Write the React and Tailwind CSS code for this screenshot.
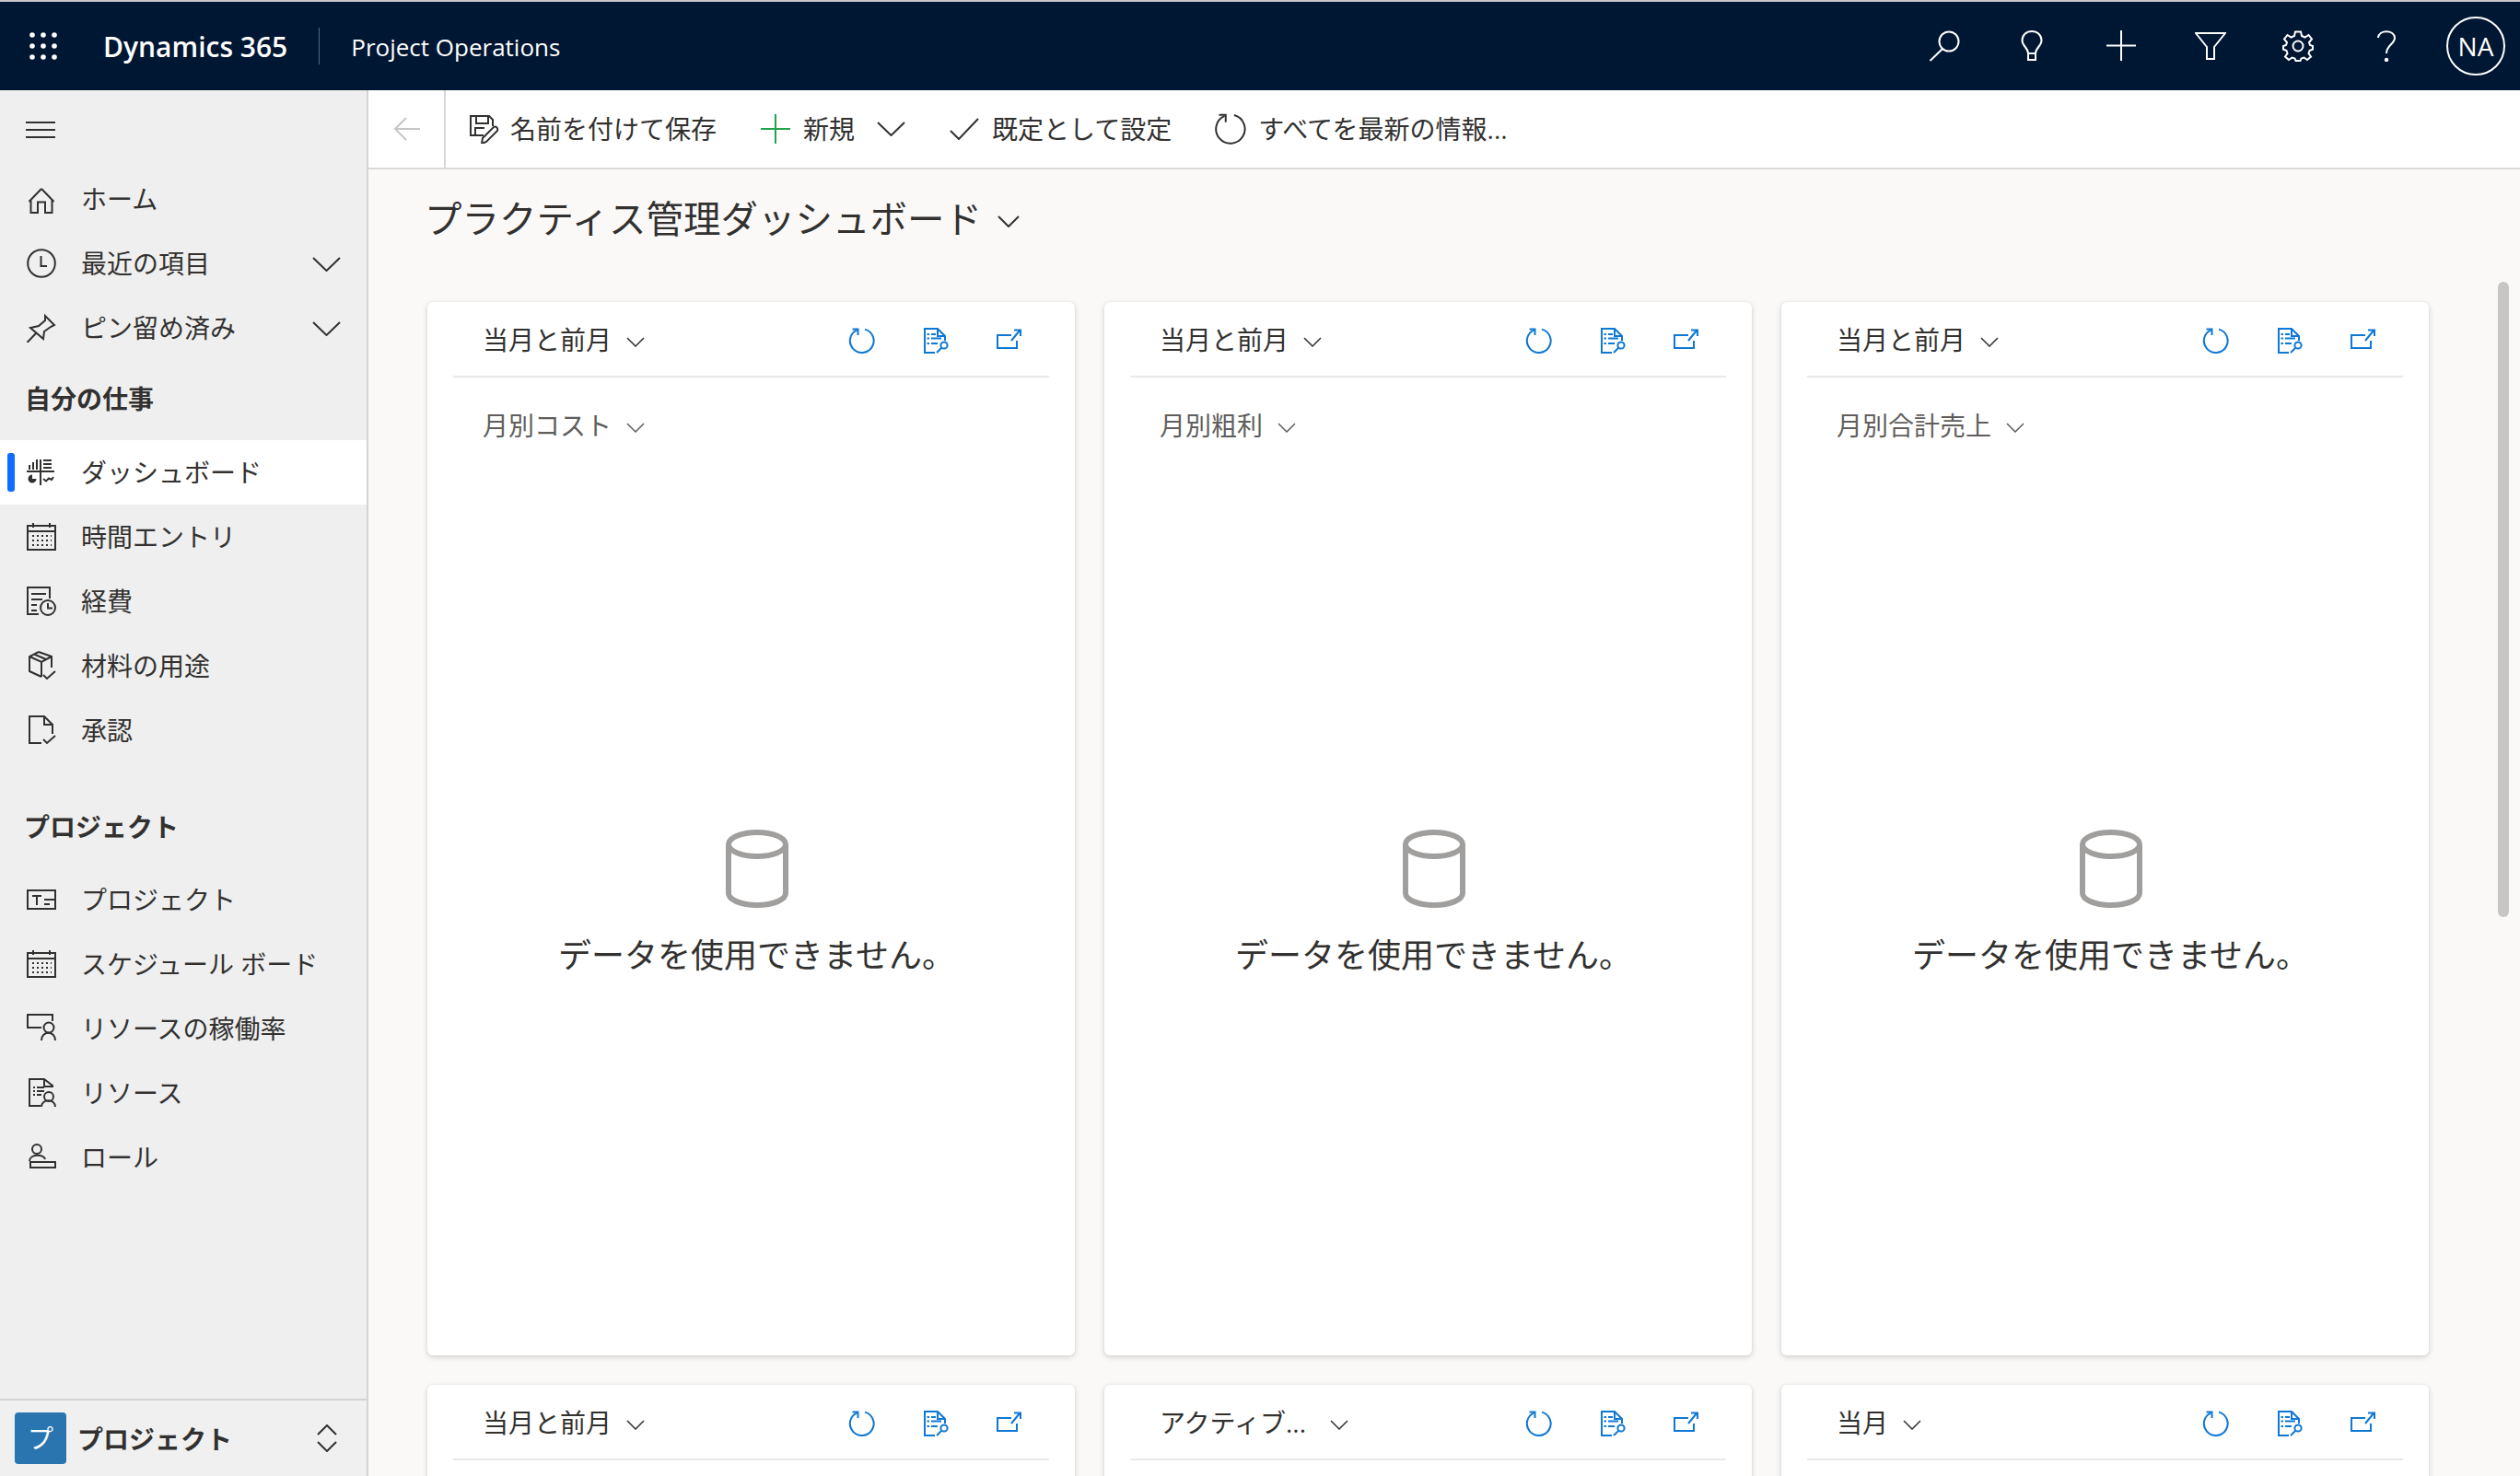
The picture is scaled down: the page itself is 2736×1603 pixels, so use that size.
import React from "react";

const Svg = ({ w = 32, h = 32, className = "", sw = 2, children }) => (
  <svg width={w} height={h} viewBox={`0 0 ${w} ${h}`} fill="none" stroke="currentColor" strokeWidth={sw} className={`flex-none ${className}`}>
    {children}
  </svg>
);

const Chevron = ({ w = 31, h = 16, sw = 2, className = "" }) => (
  <Svg w={w} h={h} sw={sw} className={className}>
    <path d={`M1 1 L${w / 2} ${h - 1} L${w - 1} 1`} />
  </Svg>
);

const Home = () => (
  <Svg><path d="M16 5 L2.5 19 M16 5 L29.5 19 M4.5 17 V31 H12 V19.5 H20 V31 H27.5 V17" /></Svg>
);
const Clock = () => (
  <Svg><circle cx="16" cy="16" r="14.8" /><path d="M15.5 8 V19 H22" /></Svg>
);
const Pin = () => (
  <Svg><path d="M20 3 L30 13 L26 15 L19 20 L18 28 L4 16 L13 14 L20 8 Z M0.5 32 L10.5 21.5" /></Svg>
);
const Dash = () => (
  <Svg>
    <path d="M15 2 V30 M0 15 H30" />
    <path d="M3 8 V13 M7 5 V13 M11 2 V13 M18 3 H27 M18 7 H27 M18 11 H27" />
    <path d="M6 18.5 A4.5 4.5 0 1 0 10.5 23 H6 Z" fill="currentColor" stroke="none" />
    <path d="M18 23 L21 25.5 L24 22.5 L27 24 L29 21" />
  </Svg>
);
const Calendar = () => (
  <Svg>
    <rect x="1" y="4" width="30" height="26" />
    <path d="M1 10 H31 M7 1 V6 M25 1 V6" />
    <path d="M6 15 H27 M6 20 H27 M6 25 H27" strokeDasharray="2 3" />
  </Svg>
);
const Expense = () => (
  <Svg>
    <path d="M13 30 H1 V1 H25 V13" />
    <path d="M5 8 H21 M5 14 H17 M5 20 H11 M5 26 H11" />
    <circle cx="23" cy="23" r="8" />
    <path d="M23 18 V23.5 H28" />
  </Svg>
);
const Box = () => (
  <Svg>
    <path d="M13 1 L3 6 V22 L16 28 M13 1 L27 6 V18 M3 6 L16 12 L27 6 M16 12 V28 M8 3.5 L21 9" />
    <path d="M18 26 L22 30 L31 22" />
  </Svg>
);
const Approve = () => (
  <Svg>
    <path d="M16 30 H3 V1 H19 L28 10 V20 M19 1 V10 H28" />
    <path d="M18 26 L22 30 L31 22" />
  </Svg>
);
const ProjectIcon = () => (
  <Svg>
    <rect x="1" y="6" width="30" height="20" />
    <path d="M6 12 H16 M11 12 V22 M19 16 H31 M19 21 H25" />
  </Svg>
);
const Util = () => (
  <Svg>
    <path d="M16 15 H1 V1 H28 V8" />
    <circle cx="24" cy="15" r="5.5" />
    <path d="M16 29 C16 18 31 18 31 29" />
  </Svg>
);
const Res = () => (
  <Svg>
    <path d="M15 30 H3 V1 H19 L28 8 V10 M19 1 V9 H28" />
    <path d="M7 10 H9 M11 10 H19 M7 14 H9 M11 14 H19 M7 18 H9 M11 18 H16" />
    <circle cx="24" cy="20" r="5" />
    <path d="M16 31 C16 22 31 22 31 31" />
  </Svg>
);
const Role = () => (
  <Svg>
    <circle cx="11" cy="7" r="5" />
    <path d="M3 20 C3 12 19 12 20 18" />
    <rect x="4" y="21" width="27" height="6" />
  </Svg>
);

const SideItem = ({ icon, label, chevron, active }) => (
  <div className={`relative flex h-[70px] items-center pl-[29px] ${active ? "bg-white" : ""}`}>
    {active && <div className="absolute left-[8px] top-[14px] h-[42px] w-[8px] rounded-[3px] bg-[#0f6cff]" />}
    <span className="flex w-[32px] flex-none text-[#323130]">{icon}</span>
    <span className="ml-[27px] text-[28px] leading-[40px] text-[#323130]">{label}</span>
    {chevron && <Chevron className="ml-auto mr-[28px] mt-[2px] text-[#323130]" />}
  </div>
);

const Refresh = ({ size = 28, className = "" }) => {
  const s = size / 28;
  return (
    <Svg w={size + 1} h={size + 1} className={className}>
      <path d={`M${18 * s} ${1.6 * s} A${12.9 * s} ${12.9 * s} 0 1 1 ${9.5 * s} ${2.3 * s}`} />
      <path d={`M${4.5 * s} ${1.5 * s} H${10.5 * s} V${8 * s}`} />
    </Svg>
  );
};

const Report = () => (
  <Svg w={28} h={28}>
    <path d="M12 27 H1 V1 H15 L23 9 V14 M15 1 V9 H23" />
    <path d="M3.5 7 H6 M8 7 H13 M3.5 11.5 H6 M8 11.5 H19 M3.5 17 H6 M8 17 H15" />
    <circle cx="22" cy="19" r="3.6" />
    <path d="M19.5 21.5 L14 27" />
  </Svg>
);

const Popout = () => (
  <Svg w={27} h={26}>
    <path d="M16 7 H1 V21 H22 V13" />
    <path d="M16 13 L25 2 M19 1.5 H26 V8" />
  </Svg>
);

const Cylinder = () => (
  <Svg w={68} h={85} sw={6}>
    <ellipse cx="34" cy="16" rx="31" ry="13" />
    <path d="M3 16 V69 C3 76 16 82 34 82 C52 82 65 76 65 69 V16" />
  </Svg>
);

const Card = ({ title, sub, cropped, chevGap = "ml-[16px]" }) => (
  <div className="h-[1144px] rounded-[6px] bg-white shadow-[0_2px_6px_rgba(0,0,0,0.16),0_0_2px_rgba(0,0,0,0.08)]">
    <div className="mx-[28px] flex h-[82px] items-center border-b-2 border-[#e9e9e9] pl-[32px] pr-[30px] pt-[2px]">
      <span className="text-[28px] leading-[40px] text-[#323130]">{title}</span>
      <Chevron w={20} h={11} sw={1.5} className={`${chevGap} mt-[4px] text-[#323130]`} />
      <div className="ml-auto mt-[2px] flex items-center text-[#0f78d4]">
        <Refresh />
        <span className="ml-[53px] flex"><Report /></span>
        <span className="ml-[51px] flex"><Popout /></span>
      </div>
    </div>
    {!cropped && (
      <>
        <div className="ml-[60px] flex h-[104px] items-center text-[#605e5c]">
          <span className="text-[28px] leading-[40px]">{sub}</span>
          <Chevron w={20} h={11} sw={1.5} className="ml-[16px] mt-[4px]" />
        </div>
        <div className="flex flex-col items-center pl-[12px] pt-[387px]">
          <span className="text-[#a19f9d]"><Cylinder /></span>
          <div className="mt-[28px] text-[36px] leading-[48px] text-[#323130]">データを使用できません。</div>
        </div>
      </>
    )}
  </div>
);

const HeaderIcons = () => (
  <div className="ml-auto flex items-center text-white">
    <Svg w={34} h={34} className="mr-[66px]"><circle cx="22" cy="12" r="10.5" /><path d="M15 20 L1.5 33" /></Svg>
    <Svg w={24} h={34} className="mr-[68px]">
      <path d="M8 25 C8 19 1.5 17 1.5 11 C1.5 5 6 1 12 1 C18 1 22.5 5 22.5 11 C22.5 17 16 19 16 25 Z M8 25 V32 H16 V25" />
    </Svg>
    <Svg w={34} h={34} className="mr-[63px]"><path d="M17 0 V33 M1 16.5 H33" /></Svg>
    <Svg w={34} h={32} className="mr-[61px]"><path d="M1 2 H33 L21 17 V30 H13 V17 Z" /></Svg>
    <Svg w={34} h={34} sw={2} className="mr-[68px]">
      <circle cx="17" cy="17" r="5.5" />
      <path d="M14 1.5 H20 L21 6 L24.5 7.5 L28.5 5 L32 9.5 L29 13 L30 16 L33 17 L33 20.5 L29.5 22 L28.5 25 L31 28.5 L27 32 L23.5 29.5 L20.5 30.5 L19.5 33 H14.5 L13.5 30.5 L10.5 29.5 L7 32 L3 28.5 L5.5 25 L4.5 22 L1 20.5 V17 L4 16 L5 13 L2 9.5 L5.5 5 L9.5 7.5 L13 6 Z" />
    </Svg>
    <Svg w={22} h={34} className="mr-[54px]">
      <path d="M2 8 C3 -1 19 -1 20 8 C20 15 11 16 11 25" />
      <circle cx="11" cy="32" r="1.2" fill="currentColor" />
    </Svg>
    <div className="mr-[16px] flex h-[64px] w-[64px] items-center justify-center rounded-full border-2 border-white text-[28px] text-white">NA</div>
  </div>
);

export default function App() {
  return (
    <div className="flex h-[1603px] w-[2736px] flex-col overflow-hidden border-t-2 border-[#c8c8c8] bg-[#faf9f8] font-['Open_Sans','Noto_Sans_CJK_JP',sans-serif] text-[#323130]">
      <header className="flex h-[96px] flex-none items-center bg-[#001733] text-white">
        <svg width="30" height="30" viewBox="0 0 30 30" fill="white" className="ml-[32px] flex-none">
          {[3, 15, 27].map((y) => [3, 15, 27].map((x) => <circle key={`${x}-${y}`} cx={x} cy={y} r="2.8" />))}
        </svg>
        <span className="ml-[50px] pt-[2px] text-[30px] font-semibold leading-[40px]">Dynamics 365</span>
        <div className="ml-[34px] h-[40px] w-[1px] bg-[#55667f]" />
        <span className="ml-[34px] pt-[2px] text-[26px] leading-[40px]">Project Operations</span>
        <HeaderIcons />
      </header>

      <div className="flex min-h-0 flex-1">
        <aside className="flex w-[400px] flex-none flex-col border-r-2 border-[#d4d4d4] bg-[#efefef]">
          <div className="flex h-[83px] flex-none items-center pl-[28px] pt-[2px]">
            <svg width="32" height="18" viewBox="0 0 32 18" stroke="#323130" strokeWidth="2" className="flex-none">
              <path d="M0 1 H32 M0 9 H32 M0 17 H32" />
            </svg>
          </div>
          <SideItem icon={<Home />} label="ホーム" />
          <SideItem icon={<Clock />} label="最近の項目" chevron />
          <SideItem icon={<Pin />} label="ピン留め済み" chevron />
          <div className="flex h-[87px] flex-none items-center pb-[4px] pl-[27px] text-[28px] font-bold leading-[40px]">自分の仕事</div>
          <SideItem active icon={<Dash />} label="ダッシュボード" />
          <SideItem icon={<Calendar />} label="時間エントリ" />
          <SideItem icon={<Expense />} label="経費" />
          <SideItem icon={<Box />} label="材料の用途" />
          <SideItem icon={<Approve />} label="承認" />
          <div className="flex h-[114px] flex-none items-end pb-[24px] pl-[26px] text-[28px] font-bold leading-[40px]">プロジェクト</div>
          <SideItem icon={<ProjectIcon />} label="プロジェクト" />
          <SideItem icon={<Calendar />} label="スケジュール ボード" />
          <SideItem icon={<Util />} label="リソースの稼働率" />
          <SideItem icon={<Res />} label="リソース" />
          <SideItem icon={<Role />} label="ロール" />
          <div className="mt-auto flex h-[84px] flex-none items-center border-t-2 border-[#d4d4d4] bg-[#f0f0f0] pl-[16px]">
            <div className="flex h-[56px] w-[56px] flex-none items-center justify-center rounded-[4px] bg-[#2a74b0] text-[28px] text-white">プ</div>
            <span className="ml-[12px] pt-[2px] text-[28px] font-bold leading-[40px]">プロジェクト</span>
            <svg width="22" height="30" viewBox="0 0 22 30" fill="none" stroke="#323130" strokeWidth="2" className="ml-auto mr-[32px] flex-none">
              <path d="M1 11 L11 1 L21 11 M1 19 L11 29 L21 19" />
            </svg>
          </div>
        </aside>

        <main className="relative flex min-w-0 flex-1 flex-col">
          <div className="flex h-[86px] flex-none items-center border-b-2 border-[#d8d8d8] bg-white text-[28px] leading-[40px]">
            <div className="flex h-full w-[84px] flex-none items-center border-r-2 border-[#d8d8d8] pl-[27px] text-[#c8c6c4]">
              <Svg w={30} h={28}><path d="M29 14 H2 M14 2 L2 14 L14 26" /></Svg>
            </div>
            <Svg w={32} h={32} className="ml-[26px]">
              <path d="M15 23 H1 V2 H21 L25 6 V13" />
              <path d="M7 2 V10 H20 V2 M6 23 V15 H16" />
              <path d="M13 32 L14 26 L26 14 Q27.5 13 29 14 Q31 16 30 18 L18 30 Z" />
            </Svg>
            <span className="ml-[12px]">名前を付けて保存</span>
            <Svg w={34} h={34} className="ml-[47px] text-[#22a34a]"><path d="M17 1 V33 M1 17 H33" /></Svg>
            <span className="ml-[13px]">新規</span>
            <Chevron className="ml-[24px]" />
            <Svg w={32} h={24} className="ml-[48px]"><path d="M1 14 L10 23 L31 1" /></Svg>
            <span className="ml-[14px]">既定として設定</span>
            <Refresh size={34} className="ml-[46px]" />
            <span className="ml-[13px]">すべてを最新の情報...</span>
          </div>

          <div className="min-h-0 flex-1 overflow-hidden pl-[64px]">
            <div className="flex h-[108px] items-center">
              <h1 className="-ml-[3px] text-[40.5px] font-normal leading-[56px]">プラクティス管理ダッシュボード</h1>
              <Chevron w={24} h={13} className="ml-[17px] mt-[4px]" />
            </div>
            <div className="mt-[36px] grid w-[2173px] grid-cols-3 gap-[32px]">
              <Card title="当月と前月" sub="月別コスト" />
              <Card title="当月と前月" sub="月別粗利" />
              <Card title="当月と前月" sub="月別合計売上" />
              <Card title="当月と前月" cropped />
              <Card title="アクティブ..." cropped chevGap="ml-[26px]" />
              <Card title="当月" cropped />
            </div>
          </div>

          <div className="absolute left-[2312px] top-[208px] h-[690px] w-[12px] rounded-full bg-[#c8c6c4]" />
        </main>
      </div>
    </div>
  );
}
